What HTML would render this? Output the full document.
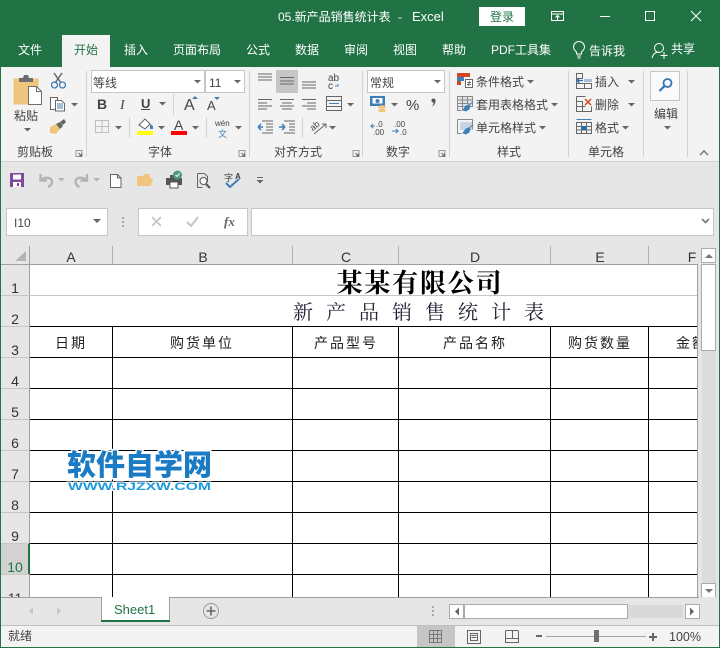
<!DOCTYPE html>
<html><head><meta charset="utf-8"><title>Excel</title>
<style>
html,body{margin:0;padding:0;background:#fff;width:720px;height:648px;overflow:hidden}
svg{position:absolute;left:0;top:0;display:block}
text{font-family:"Liberation Sans","Noto Sans CJK SC",sans-serif;font-size:12px;fill:#444}
.w{fill:#fff}
.l{font-family:"Liberation Sans",sans-serif;font-size:14px;fill:#333;text-anchor:middle}
.c{font-family:"Noto Sans CJK SC",sans-serif;font-size:14px;fill:#222;text-anchor:middle;letter-spacing:2px;font-weight:400}
.s{fill:none;stroke:#666;stroke-width:1}
.r{shape-rendering:crispEdges}
</style></head><body>
<svg width="720" height="648" viewBox="0 0 720 648" xmlns="http://www.w3.org/2000/svg">
<defs>
<path id="a" d="M-3.5 0h7L0 3.500z" fill="#666"/>
<g id="dl"><path d="M0.500 0.500h6v6h-6z" fill="none" stroke="#999"/><path d="M3 3l3 3M6 3.500V6H3.500" fill="none" stroke="#666"/></g>
</defs>
<g class="r">
<rect width="720" height="648" fill="#e6e6e6"/>
<rect width="720" height="67" fill="#217346"/>
<rect x="62" y="35" width="48" height="32" fill="#f3f3f3"/>
<rect x="1" y="67" width="718" height="94" fill="#f3f3f3"/>
<rect x="0" y="161" width="720" height="1" fill="#d2d2d2"/>
<rect x="0" y="67" width="1" height="581" fill="#217346"/>
<rect x="719" y="67" width="1" height="581" fill="#217346"/>
<rect x="0" y="647" width="720" height="1" fill="#217346"/>
<rect x="479" y="7" width="46" height="19" fill="#fff"/>
</g>
<!-- title bar -->
<text class="w" x="278" y="21">05.新产品销售统计表</text>
<text class="w" x="398" y="21" style="font-size:12px">-</text>
<text class="w" x="412" y="21" style="font-size:13px">Excel</text>
<text x="490" y="21" style="fill:#217346">登录</text>
<g fill="none" stroke="#fff">
<path d="M551.500 11.500h12v9h-12zM551.500 14h12M557.500 20v-4M555.500 17.500l2-2 2 2"/>
<path d="M600 16.500h10"/>
<path d="M645.500 11.500h9v9h-9z"/>
<path d="M691 11l10 10M701 11l-10 10"/>
<path d="M577 57h4M577.500 59h3M576.500 55v-2c-1-1-3-2.500-3-5a5.500 5.500 0 0 1 11 0c0 2.500-2 4-3 5v2z" transform="translate(0 -1)"/>
<circle cx="659" cy="48" r="4.500"/>
<path d="M652 58c1-4 3.500-6 7-6M664 52v7M660.500 55.500h7"/>
</g>
<!-- tabs -->
<text class="w" x="18" y="54">文件</text>
<text x="74" y="54" style="fill:#217346">开始</text>
<text class="w" x="124" y="54">插入</text>
<text class="w" x="173" y="54">页面布局</text>
<text class="w" x="246" y="54">公式</text>
<text class="w" x="295" y="54">数据</text>
<text class="w" x="344" y="54">审阅</text>
<text class="w" x="393" y="54">视图</text>
<text class="w" x="442" y="54">帮助</text>
<text class="w" x="491" y="54">PDF工具集</text>
<text class="w" x="589" y="55">告诉我</text>
<text class="w" x="671" y="53">共享</text>
<!-- ribbon separators -->
<g fill="#d2d2d2" class="r">
<rect x="86" y="71" width="1" height="86"/><rect x="249" y="71" width="1" height="86"/>
<rect x="362" y="71" width="1" height="86"/><rect x="449" y="71" width="1" height="86"/>
<rect x="568" y="71" width="1" height="86"/><rect x="643" y="71" width="1" height="86"/><rect x="687" y="71" width="1" height="86"/>
<rect x="173" y="94" width="1" height="21"/><rect x="129" y="117" width="1" height="21"/><rect x="206" y="117" width="1" height="21"/><rect x="302" y="117" width="1" height="21"/>
</g>
<!-- clipboard -->
<path d="M14 79h24v25H14z" fill="#f0c67f" stroke="#ecc47b"/>
<path d="M19 78h4l1-3h4l1 3h4v4H19z" fill="#6d6d6d"/>
<path d="M28.500 86.500h8l5 5v13h-13z" fill="#fff" stroke="#6d6d6d"/>
<path d="M36.500 86.500v5h5" fill="none" stroke="#6d6d6d"/>
<text x="14" y="120">粘贴</text>
<use href="#a" x="27.500" y="128"/>
<path d="M54 73l7 10M62 73l-7 10" stroke="#666" stroke-width="1.500" fill="none"/>
<circle cx="54.500" cy="85" r="3" fill="none" stroke="#3f7fb8" stroke-width="1.300"/><circle cx="62.500" cy="85" r="3" fill="none" stroke="#3f7fb8" stroke-width="1.300"/>
<path d="M50.500 97.500h7v12h-7z" fill="#fff" stroke="#666"/>
<path d="M55.500 100.500h6l3 3v7.500h-9z" fill="#fff" stroke="#666"/>
<path d="M57 104h6M57 106h6M57 108h6" stroke="#3f7fb8"/>
<use href="#a" x="74.500" y="103"/>
<path d="M50 127l6-3 4 5-4 5-6-1z" fill="#f0c67f"/>
<path d="M56 124l4 5 3-3-3-4zM60 122l4-3 2 3-3 3z" fill="#666"/>
<text x="17" y="156">剪贴板</text>
<use href="#dl" x="75.500" y="150"/>
<!-- font -->
<g class="r"><rect x="91.500" y="70.500" width="113" height="22" fill="#fff" stroke="#c6c6c6"/><rect x="205.500" y="70.500" width="39" height="22" fill="#fff" stroke="#c6c6c6"/></g>
<text x="93" y="87">等线</text><use href="#a" x="197.500" y="80"/>
<text x="209" y="87">11</text><use href="#a" x="237.500" y="80"/>
<text x="97" y="109" style="font-size:14px;font-weight:700;font-family:'Liberation Sans'">B</text>
<text x="120" y="109" style="font-size:14px;font-style:italic;font-family:'Liberation Serif'">I</text>
<text x="141" y="108" style="font-size:13px;font-weight:700;font-family:'Liberation Sans'">U</text>
<rect x="141" y="109" width="9" height="1" fill="#444"/>
<use href="#a" x="162.500" y="102"/>
<text x="184" y="110" style="font-size:16px;font-family:'Liberation Sans'">A</text>
<path d="M192 99h6l-3-3z" fill="#3f7fb8"/>
<text x="207" y="110" style="font-size:13px;font-family:'Liberation Sans'">A</text>
<path d="M214 97h6l-3 3z" fill="#3f7fb8"/>
<path d="M95.500 120.500h13v12h-13zM102 120.500v12M95.500 126.500h13" fill="none" stroke="#888" stroke-dasharray="1 1"/>
<use href="#a" x="118.500" y="126"/>
<path d="M139 125l6-6 5 5-5 5z" fill="#fff" stroke="#666"/>
<path d="M150 124l3 2v3h-3z" fill="#3f7fb8"/>
<rect x="137" y="131" width="16" height="4" fill="#ff0" class="r"/>
<use href="#a" x="161.500" y="126"/>
<text x="174" y="130" style="font-size:14px;font-family:'Liberation Sans'">A</text>
<rect x="171" y="131" width="16" height="4" fill="#f00" class="r"/>
<use href="#a" x="195.500" y="126"/>
<text x="215" y="126" style="font-size:8px">wén</text>
<text x="218" y="137" style="font-size:9px;fill:#3f7fb8">文</text>
<use href="#a" x="238.500" y="126"/>
<text x="148" y="156">字体</text>
<use href="#dl" x="238.500" y="150"/>
<!-- alignment -->
<rect x="276" y="70" width="22" height="23" fill="#c6c6c6" class="r"/>
<path class="s r" d="M258 74h14M258 77h14M258 80h14M280 77.500h14M280 81h14M280 84h14M302 82h14M302 85h14M302 88h14
M258 99.500h14M258 103h9M258 106h14M258 109h9M280 99.500h14M282 103h10M280 106h14M282 109h10M302 99.500h14M307 103h9M302 106h14M307 109h9
M262 121h11M266 124h7M266 127h7M266 130h7M262 133h11M284 121h11M289 124h6M289 127h6M289 130h6M284 133h11"/>
<text x="328" y="81" style="font-size:10px;font-family:'Liberation Sans'">ab</text>
<text x="328" y="89" style="font-size:10px;font-family:'Liberation Sans'">c</text>
<path d="M338 84v2h-3" fill="none" stroke="#3f7fb8"/>
<path d="M326.500 96.500h15v14h-15zM326.500 100.500h15M326.500 106.500h15" fill="none" stroke="#666"/>
<path d="M329 103.500h10" stroke="#3f7fb8"/>
<use href="#a" x="350.500" y="103"/>
<path d="M263 127h-5M258 127l3-3M258 127l3 3" fill="none" stroke="#3f7fb8" stroke-width="1.500"/>
<path d="M279 127h6M285 127l-3-3M285 127l-3 3" fill="none" stroke="#3f7fb8" stroke-width="1.500"/>
<text x="310" y="128" transform="rotate(-40 316 126)" style="font-size:9px;font-family:'Liberation Sans'">ab</text>
<path d="M314 134l12-10M326 124h-4M326 124v4" fill="none" stroke="#666"/>
<use href="#a" x="332.500" y="126"/>
<text x="274" y="156">对齐方式</text>
<use href="#dl" x="352.500" y="150"/>
<!-- number -->
<rect x="367.500" y="70.500" width="77" height="22" fill="#fff" stroke="#c6c6c6" class="r"/>
<text x="370" y="87">常规</text><use href="#a" x="437.500" y="80"/>
<rect x="370" y="96" width="15" height="10" fill="#3f7fb8"/><rect x="372.500" y="98" width="10" height="5.500" fill="#fff"/><circle cx="377.500" cy="101" r="2" fill="#3f7fb8"/>
<ellipse cx="382" cy="107" rx="4" ry="1.800" fill="#f0c67f"/><ellipse cx="382" cy="110.500" rx="4" ry="1.800" fill="#f0c67f"/>
<use href="#a" x="394.500" y="103"/>
<text x="406" y="110" style="font-size:15px;font-family:'Liberation Sans'">%</text>
<path d="M433.500 98.500a2 2 0 0 1 2 2c0 3-1.500 5-3.500 6 1-1.500 1.500-2.500 1.500-4a2 2 0 0 1 0-4z" fill="#555"/>
<text x="376" y="127" style="font-size:8px;font-family:'Liberation Sans'">.0</text>
<text x="373" y="135" style="font-size:8px;font-family:'Liberation Sans'">.00</text>
<path d="M375 126h-4l2-2M371 126l2 2" fill="none" stroke="#3f7fb8"/>
<text x="394" y="127" style="font-size:8px;font-family:'Liberation Sans'">.00</text>
<text x="400" y="135" style="font-size:8px;font-family:'Liberation Sans'">.0</text>
<path d="M392 131h6l-2-2M398 131l-2 2" fill="none" stroke="#3f7fb8"/>
<text x="386" y="156">数字</text>
<use href="#dl" x="438.500" y="150"/>
<!-- styles -->
<rect x="457" y="73" width="13" height="4" fill="#d24726"/><rect x="457" y="77" width="7" height="4" fill="#3f7fb8"/><rect x="457" y="81" width="4" height="4" fill="#d24726"/>
<path d="M465.500 79.500h7v8h-7z" fill="#fff" stroke="#666"/><path d="M467 82.500h4M467 84.500h4M470 81l-2 5" stroke="#444" stroke-width=".7"/>
<path d="M457.500 96.500h15v10h-15zM457.500 100h15M457.500 103.500h12M462.500 96.500v14M467.500 96.500v8M457.500 96.500v14h4" fill="#dfe3e8" stroke="#8a8a8a"/>
<path d="M463 110l3-4 3-1 1 1-1 3-3 2zM469 105l4-3" fill="#3f7fb8" stroke="#3f7fb8"/>
<path d="M457.500 119.500h15v10M457.500 119.500v14h4" fill="none" stroke="#8a8a8a"/>
<rect x="460" y="122" width="12" height="8" fill="#c8d4e2"/>
<path d="M463 133l3-4 3-1 1 1-1 3-3 2zM469 128l4-3" fill="#3f7fb8" stroke="#3f7fb8"/>
<text x="476" y="86">条件格式</text><use href="#a" x="530.500" y="80"/>
<text x="476" y="109">套用表格格式</text><use href="#a" x="554.500" y="103"/>
<text x="476" y="132">单元格样式</text><use href="#a" x="542.500" y="126"/>
<text x="497" y="156">样式</text>
<!-- cells -->
<path class="s r" d="M576.500 73.500h6v5h-6zM576.500 83.500h15v5h-15zM576.500 83.500v5M584.500 83.500v5M576.500 73.500v15"/>
<rect x="584" y="79" width="8" height="3" fill="#a9bdd6"/>
<path d="M583 80.500h-6M577 80.500l2.500-2.500M577 80.500l2.500 2.500" fill="none" stroke="#2a6fad" stroke-width="1.300"/>
<path class="s r" d="M576.500 96.500h9M576.500 96.500v15h15v-5M576.500 101.500h6v5h-6zM582.500 106.500v5M576.500 106.500h9"/>
<path d="M585 99l6 6M591 99l-6 6" stroke="#d24726" stroke-width="1.500" fill="none"/>
<path d="M576.500 119.500h15" stroke="#3f7fb8" fill="none"/>
<path class="s r" d="M576.500 122.500h15v11h-15zM576.500 126.500h15M576.500 130h15M581.500 122.500v11M586.500 122.500v11"/>
<rect x="581" y="126" width="6" height="4" fill="#2a6fad"/>
<text x="595" y="86">插入</text><use href="#a" x="631.500" y="80"/>
<text x="595" y="109">删除</text><use href="#a" x="631.500" y="103"/>
<text x="595" y="132">格式</text><use href="#a" x="625.500" y="126"/>
<text x="588" y="156">单元格</text>
<!-- edit -->
<rect x="650.500" y="71.500" width="29" height="29" fill="#fafafa" stroke="#c6c6c6" class="r"/>
<circle cx="667.500" cy="83" r="4" fill="none" stroke="#2f75b5" stroke-width="1.800"/>
<path d="M664.500 86l-5 5" stroke="#2f75b5" stroke-width="2.200"/>
<text x="654" y="118">编辑</text><use href="#a" x="667.500" y="126"/>
<path d="M700 155l4-4 4 4" fill="none" stroke="#777" stroke-width="1.500"/>
<!-- QAT -->
<rect x="10" y="173" width="14" height="14" fill="#7e4a9e"/><rect x="13" y="174.500" width="8" height="5" fill="#fff"/><rect x="13" y="182" width="8" height="5" fill="#fff"/><rect x="17" y="183" width="2" height="3" fill="#7e4a9e"/>
<path d="M40.500 174v6.500h6.500M41 180.500c3-4 11-4 11 1.500 0 2.500-2 4-4 5" fill="none" stroke="#b4b4b4" stroke-width="2.400"/>
<use href="#a" x="61.500" y="178" opacity=".4"/>
<path d="M87 174v6.500h-6.500M86.500 180.500c-3-4-11-4-11 1.500 0 2.500 2 4 4 5" fill="none" stroke="#b4b4b4" stroke-width="2.400"/>
<use href="#a" x="96.500" y="178" opacity=".4"/>
<path d="M110.500 174.500h7l3.500 3.500v9.500h-10.500z" fill="#fff" stroke="#666"/>
<path d="M117.500 174.500v3.500h3.500" fill="none" stroke="#666"/>
<path d="M137 186v-10h6l1-2h6v4h3l-2 8z" fill="#f0c67f"/>
<rect x="166" y="178" width="16" height="7" fill="#555"/><rect x="170" y="182" width="8" height="6" fill="#fff" stroke="#555"/>
<rect x="170" y="175" width="6" height="4" fill="#555"/>
<circle cx="177.500" cy="175" r="4.500" fill="#4d9a82"/><path d="M175.500 175l1.500 1.500 2.500-3" stroke="#fff" fill="none"/>
<path d="M197.500 173.500h7l3 3v6M197.500 173.500v14h5" fill="none" stroke="#666"/>
<circle cx="203.500" cy="181" r="3.500" fill="#fff" stroke="#555"/><path d="M206 184l4 4" stroke="#555" stroke-width="2"/>
<text x="224" y="181" style="font-size:9px">字</text><text x="235" y="179" style="font-size:8px;font-weight:700;font-family:'Liberation Sans'">A</text>
<path d="M226 183l4 4 9-8" fill="none" stroke="#3f7fb8" stroke-width="2"/>
<path d="M257 177.500h6" stroke="#666"/><use href="#a" x="260" y="180"/>
<!-- formula bar -->
<g class="r">
<rect x="6.500" y="208.500" width="101" height="27" fill="#fff" stroke="#c6c6c6"/>
<rect x="138.500" y="208.500" width="109" height="27" fill="#fff" stroke="#c6c6c6"/>
<rect x="251.500" y="208.500" width="462" height="27" fill="#fff" stroke="#c6c6c6"/>
<rect x="122" y="217" width="2" height="2" fill="#aaa"/><rect x="122" y="221" width="2" height="2" fill="#aaa"/><rect x="122" y="225" width="2" height="2" fill="#aaa"/>
</g>
<text x="14" y="227" style="font-size:12px;font-family:'Liberation Sans'">I10</text>
<path d="M93 219h8l-4 4z" fill="#666"/>
<path d="M152 217l9 9M161 217l-9 9" stroke="#c6c6c6" stroke-width="1.600" fill="none"/>
<path d="M187 222l4 4 7-9" stroke="#c6c6c6" stroke-width="2" fill="none"/>
<text x="224" y="226" style="font-size:13px;font-style:italic;font-weight:700;font-family:'Liberation Serif';fill:#666">fx</text>
<path d="M702 219l3.500 3.500 3.500-3.500" fill="none" stroke="#777" stroke-width="1.600"/>
<!-- sheet -->
<g class="r">
<rect x="30" y="265" width="667" height="332" fill="#fff"/>
<rect x="1" y="264" width="697" height="1" fill="#9f9f9f"/>
<rect x="29" y="246" width="1" height="351" fill="#9f9f9f"/>
<rect x="697" y="264" width="1" height="334" fill="#9f9f9f"/>
<g fill="#b0b0b0"><rect x="112" y="246" width="1" height="18"/><rect x="292" y="246" width="1" height="18"/><rect x="398" y="246" width="1" height="18"/><rect x="550" y="246" width="1" height="18"/><rect x="648" y="246" width="1" height="18"/></g>
<rect x="1" y="543" width="28" height="31" fill="#d2d2d2"/>
<rect x="28" y="543" width="2" height="31" fill="#217346"/>
<g fill="#c6c6c6">
<rect x="1" y="295" width="696" height="1"/><rect x="1" y="326" width="28" height="1"/><rect x="1" y="357" width="28" height="1"/><rect x="1" y="388" width="28" height="1"/><rect x="1" y="419" width="28" height="1"/><rect x="1" y="450" width="28" height="1"/><rect x="1" y="481" width="28" height="1"/><rect x="1" y="512" width="28" height="1"/><rect x="1" y="543" width="28" height="1"/><rect x="1" y="574" width="28" height="1"/>
</g>
<g fill="#000">
<rect x="30" y="326" width="667" height="1"/><rect x="30" y="357" width="667" height="1"/><rect x="30" y="388" width="667" height="1"/><rect x="30" y="419" width="667" height="1"/><rect x="30" y="450" width="667" height="1"/><rect x="30" y="481" width="667" height="1"/><rect x="30" y="512" width="667" height="1"/><rect x="30" y="543" width="667" height="1"/><rect x="30" y="574" width="667" height="1"/>
<rect x="112" y="326" width="1" height="271"/><rect x="292" y="326" width="1" height="271"/><rect x="398" y="326" width="1" height="271"/><rect x="550" y="326" width="1" height="271"/><rect x="648" y="326" width="1" height="271"/>
</g>
</g>
<path d="M15 261h11v-10z" fill="#b4b4b4"/>
<text class="l" x="71" y="262">A</text><text class="l" x="203" y="262">B</text><text class="l" x="346" y="262">C</text><text class="l" x="475" y="262">D</text><text class="l" x="600" y="262">E</text><text class="l" x="692" y="262">F</text>
<text class="l" x="15" y="293">1</text><text class="l" x="15" y="324">2</text><text class="l" x="15" y="355">3</text><text class="l" x="15" y="386">4</text><text class="l" x="15" y="417">5</text><text class="l" x="15" y="448">6</text><text class="l" x="15" y="479">7</text><text class="l" x="15" y="510">8</text><text class="l" x="15" y="541">9</text>
<text class="l" x="15" y="572" style="fill:#217346">10</text>
<text class="l" x="15" y="603">11</text>
<text x="420" y="292" style="font-family:'Noto Serif CJK SC',serif;font-weight:700;font-size:26px;fill:#000;text-anchor:middle;letter-spacing:1.800px">某某有限公司</text>
<text x="293" y="319" style="font-family:'Noto Serif CJK SC',serif;font-size:20px;fill:#223;letter-spacing:13px">新产品销售统计表</text>
<text class="c" x="71" y="348">日期</text>
<text class="c" x="202" y="348">购货单位</text>
<text class="c" x="346" y="348">产品型号</text>
<text class="c" x="475" y="348">产品名称</text>
<text class="c" x="600" y="348">购货数量</text>
<svg x="649" y="327" width="48" height="30"><text x="27" y="21" style="font-family:'Noto Sans CJK SC',sans-serif;font-size:14px;fill:#222;letter-spacing:2px">金额</text></svg>
<!-- watermark -->
<g style="paint-order:stroke">
<text x="67" y="475" style="font-family:'Noto Sans CJK SC',sans-serif;font-weight:900;font-size:29px;fill:#1a7bc4;stroke:#fff;stroke-width:3px">软件自学网</text>
<text x="68" y="490" textLength="143" lengthAdjust="spacingAndGlyphs" style="font-family:'Liberation Sans',sans-serif;font-weight:700;font-size:11px;fill:#1c9be0;stroke:#fff;stroke-width:2px">WWW.RJZXW.COM</text>
</g>
<!-- vertical scrollbar -->
<g class="r">
<rect x="698" y="246" width="21" height="352" fill="#e6e6e6"/>
<rect x="701.500" y="248.500" width="14" height="14" fill="#fff" stroke="#ababab"/>
<rect x="701.500" y="264.500" width="14" height="86" fill="#fff" stroke="#ababab"/>
<rect x="702" y="351" width="14" height="232" fill="#dcdcdc"/>
<rect x="701.500" y="583.500" width="14" height="14" fill="#fff" stroke="#ababab"/>
</g>
<path d="M705 258h8l-4-4z" fill="#777"/><path d="M705 589h8l-4 4z" fill="#777"/>
<!-- tab bar -->
<g class="r">
<rect x="1" y="597" width="718" height="29" fill="#e6e6e6"/>
<rect x="1" y="597" width="100" height="1" fill="#9f9f9f"/><rect x="170" y="597" width="529" height="1" fill="#9f9f9f"/>
<rect x="101" y="597" width="1" height="25" fill="#9f9f9f"/><rect x="169" y="597" width="1" height="25" fill="#9f9f9f"/>
<rect x="102" y="597" width="67" height="23" fill="#fff"/>
<rect x="101" y="620" width="69" height="2" fill="#217346"/>
<rect x="1" y="625" width="718" height="1" fill="#c0c0c0"/>
<rect x="1" y="626" width="718" height="21" fill="#f3f3f3"/>
<rect x="417" y="626" width="38" height="21" fill="#c6c6c6"/>
<rect x="432" y="606" width="2" height="2" fill="#aaa"/><rect x="432" y="610" width="2" height="2" fill="#aaa"/><rect x="432" y="614" width="2" height="2" fill="#aaa"/>
<rect x="449.500" y="604.500" width="14" height="14" fill="#fff" stroke="#ababab"/>
<rect x="464.500" y="604.500" width="163" height="14" fill="#fff" stroke="#ababab"/>
<rect x="628" y="605" width="55" height="13" fill="#d9d9d9"/>
<rect x="685.500" y="604.500" width="14" height="14" fill="#fff" stroke="#ababab"/>
</g>
<path d="M33 607v8l-4-4z" fill="#c6c6c6"/><path d="M57 607v8l4-4z" fill="#c6c6c6"/>
<path d="M459 607.500v8l-4-4z" fill="#666"/><path d="M690 607.500v8l4-4z" fill="#666"/>
<text x="114" y="614" style="font-family:'Liberation Sans',sans-serif;font-size:13px;fill:#217346">Sheet1</text>
<circle cx="211" cy="611" r="7.500" fill="none" stroke="#999"/>
<path d="M206.500 611h9M211 606.500v9" stroke="#666" stroke-width="1.600"/>
<!-- status -->
<text x="8" y="640">就绪</text>
<path class="r" d="M429.500 630.500h12v12h-12zM429.500 634.500h12M429.500 638.500h12M433.500 630.500v12M437.500 630.500v12" fill="none" stroke="#777"/>
<path class="r" d="M467.500 630.500h13v13h-13zM470.500 633.500h7v7h-7zM471.500 635.500h5M471.500 637.500h5" fill="none" stroke="#666"/>
<path class="r" d="M505.500 631v11.500h13V631M505.500 638.500h13M512.500 631v7.500M505.500 630.500h13" fill="none" stroke="#666"/>
<g class="r">
<rect x="536" y="635" width="6" height="2" fill="#666"/>
<rect x="546" y="636" width="100" height="1" fill="#a6a6a6"/>
<rect x="594" y="630" width="5" height="12" fill="#6f6f6f"/>
<rect x="649" y="636" width="8" height="2" fill="#666"/><rect x="652" y="633" width="2" height="8" fill="#666"/>
</g>
<text x="669" y="641" style="font-size:12.500px;font-family:'Liberation Sans'">100%</text>
</svg>
</body></html>
